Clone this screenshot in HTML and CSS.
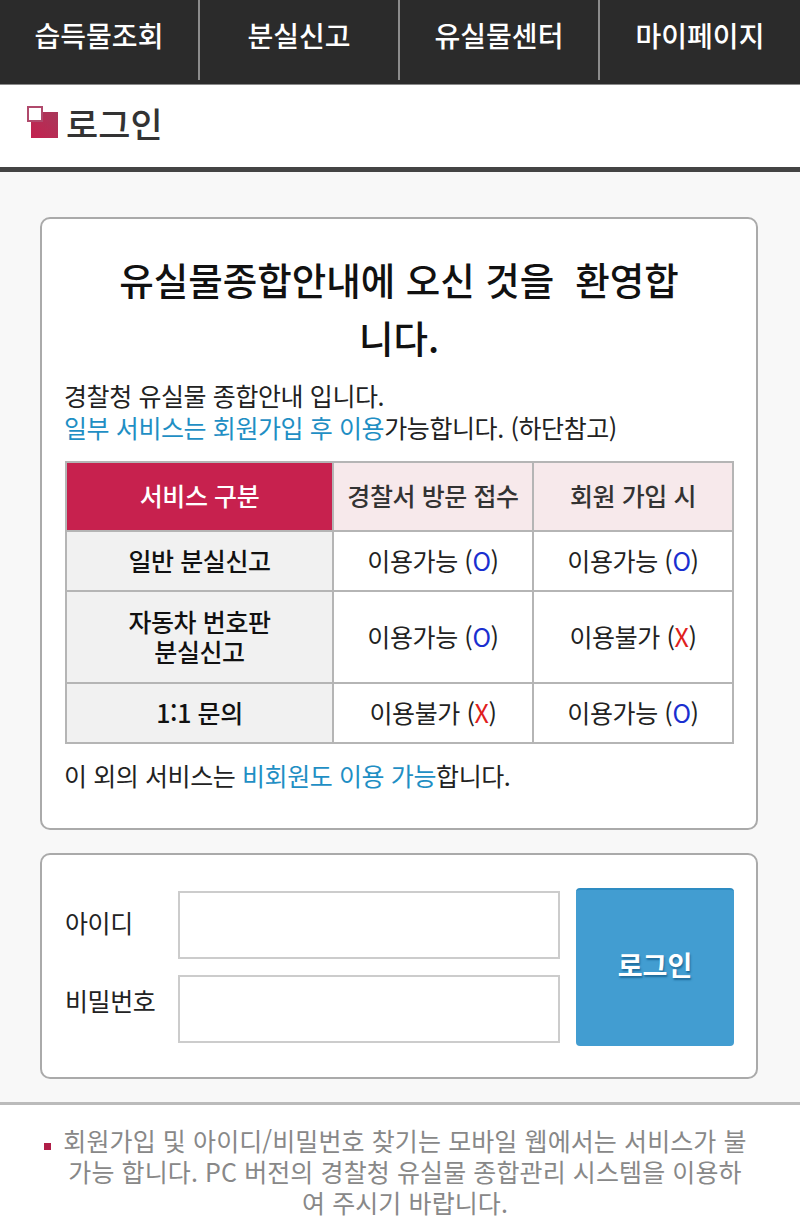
FILE: index.html
```html
<!DOCTYPE html>
<html lang="ko">
<head>
<meta charset="utf-8">
<title>로그인</title>
<link rel="stylesheet" href="styles.css">
</head>
<body>
<nav class="nav">
  <a class="nav-item">습득물조회</a>
  <a class="nav-item">분실신고</a>
  <a class="nav-item">유실물센터</a>
  <a class="nav-item">마이페이지</a>
</nav>
<header class="page-head">
  <svg class="page-icon" width="32" height="33" viewBox="0 0 32 33">
    <defs>
      <linearGradient id="g" x1="0" y1="1" x2="1" y2="0">
        <stop offset="0" stop-color="#c4214f"/>
        <stop offset="1" stop-color="#a8385a"/>
      </linearGradient>
    </defs>
    <rect x="4" y="6" width="27" height="26" fill="url(#g)"/>
    <rect x="1" y="1" width="14" height="14" fill="#fff" stroke="#b04a6c" stroke-width="2"/>
  </svg>
  <h1 class="page-title">로그인</h1>
</header>
<main class="content">
  <section class="card intro">
    <h2 class="welcome">유실물종합안내에 오신 것을&nbsp; 환영합니다.</h2>
    <p class="lead">경찰청 유실물 종합안내 입니다.<br><span class="hl">일부 서비스는 회원가입 후 이용</span>가능합니다. (하단참고)</p>
    <table class="svc">
      <tr class="r-head">
        <th class="th-main">서비스 구분</th>
        <th class="th-sub">경찰서 방문 접수</th>
        <th class="th-sub">회원 가입 시</th>
      </tr>
      <tr class="r-a">
        <th class="th-row">일반 분실신고</th>
        <td>이용가능 (<span class="yes">O</span>)</td>
        <td>이용가능 (<span class="yes">O</span>)</td>
      </tr>
      <tr class="r-b">
        <th class="th-row">자동차 번호판<br>분실신고</th>
        <td>이용가능 (<span class="yes">O</span>)</td>
        <td>이용불가 (<span class="no">X</span>)</td>
      </tr>
      <tr class="r-a">
        <th class="th-row">1:1 문의</th>
        <td>이용불가 (<span class="no">X</span>)</td>
        <td>이용가능 (<span class="yes">O</span>)</td>
      </tr>
    </table>
    <p class="after">이 외의 서비스는 <span class="hl">비회원도 이용 가능</span>합니다.</p>
  </section>
  <section class="card login">
    <div class="fields">
      <label class="field"><span class="field-label label-id">아이디</span><input class="field-input" type="text"></label>
      <label class="field"><span class="field-label label-pw">비밀번호</span><input class="field-input" type="password"></label>
    </div>
    <button class="submit" type="button"><span class="submit-text">로그인</span></button>
  </section>
</main>
<footer class="note">
  <p class="note-text"><span class="bullet"></span>회원가입 및 아이디/비밀번호 찾기는 모바일 웹에서는 서비스가 불가능 합니다. PC 버전의 경찰청 유실물 종합관리 시스템을 이용하여 주시기 바랍니다.</p>
</footer>
</body>
</html>
```
FILE: styles.css
```css
* { box-sizing: border-box; }
html, body { margin: 0; padding: 0; }
body {
  width: 800px;
  height: 1228px;
  overflow: hidden;
  background: #fff;
  font-family: "Noto Sans CJK KR", "Noto Sans", sans-serif;
  color: #111;
}
.nav {
  display: flex;
  height: 85px;
  background: #2b2b2b;
  border-bottom: 1px solid #8a8a8a;
}
.nav-item {
  flex: 0 0 200px;
  height: 80px;
  padding-bottom: 10px;
  display: flex;
  align-items: center;
  justify-content: center;
  color: #fff;
  font-size: 28px;
  font-weight: 500;
  border-right: 2px solid #8c8c8c;
}
.nav-item:last-child { border-right: 0; }
.page-head {
  height: 87px;
  display: flex;
  align-items: center;
  padding: 0 0 7px 27px;
  background: #fff;
  border-bottom: 5px solid #444;
}
.page-icon { margin-right: 7px; }
.page-title {
  margin: 0;
  font-size: 35px;
  font-weight: 500;
  color: #333;
  line-height: 40px;
}
.content {
  height: 933px;
  background: #f8f8f8;
  padding: 45px 42px 0 40px;
  border-bottom: 3px solid #bbb;
}
.card {
  background: #fff;
  border: 2px solid #aaa;
  border-radius: 10px;
}
.intro {
  height: 613px;
  padding: 31px 23px 0;
}
.welcome {
  margin: 0 50px 13px;
  font-size: 37.500px;
  line-height: 58px;
  font-weight: 500;
  text-align: center;
  color: #111;
  word-break: break-all;
}
.lead, .after {
  margin: 0 0 0 -1px;
  font-size: 25px;
  line-height: 32px;
  letter-spacing: -0.4px;
  color: #222;
}
.hl { color: #1f8fc4; }
.svc {
  margin: 18px 0 15px;
  width: 669px;
  table-layout: fixed;
  border-collapse: collapse;
  border: 2px solid #aaa;
}
.svc th, .svc td {
  border: 2px solid #b5b5b5;
  padding: 0 0 3px;
  text-align: center;
  font-size: 25px;
  line-height: 30px;
  letter-spacing: -0.4px;
}
.svc th { font-weight: 500; }
.svc td { width: 200px; color: #222; }
.r-head { height: 69px; }
.r-a { height: 60px; }
.r-b { height: 92px; }
.th-main { width: 267px; background: #c7214e; color: #fff; }
.th-sub { background: #f7e9eb; color: #333; }
.th-row { background: #f1f1f1; color: #111; }
.yes { color: #1a2fd0; }
.no { color: #e0201c; }
.login {
  margin-top: 23px;
  height: 226px;
  padding: 33px 23px 0;
  display: flex;
  gap: 16px;
}
.fields { flex: 0 0 495px; display: flex; flex-direction: column; gap: 16px; padding-top: 3px; }
.field { display: flex; align-items: center; }
.field-label {
  flex: 0 0 113px;
  font-size: 25px;
  line-height: 32px;
  letter-spacing: -0.4px;
  color: #222;
}
.label-id { padding-bottom: 6px; }
.label-pw { padding-bottom: 18px; }
.field-input {
  width: 382px;
  height: 68px;
  background: #fff;
  border: 2px solid #ccc;
  border-radius: 0;
  padding: 0;
  outline: 0;
}
.submit {
  flex: 0 0 158px;
  height: 158px;
  background: #429dd1;
  border: 0;
  border-top: 2px solid #2e8cc2;
  border-radius: 4px;
  color: #fff;
  font-family: inherit;
  font-size: 27px;
  font-weight: 700;
  text-shadow: 1px 2px 2px #1f6a99;
  padding: 0 0 8px;
}
.note { background: #fff; padding: 20px 50px 0 60px; }
.note-text {
  margin: 0;
  text-align: center;
  font-size: 25px;
  line-height: 31px;
  letter-spacing: 0.1px;
  color: #888;
}
.bullet {
  display: inline-block;
  width: 7px;
  height: 7px;
  background: #b01e48;
  margin: 0 12px 0 -19px;
  vertical-align: 1px;
}
```
